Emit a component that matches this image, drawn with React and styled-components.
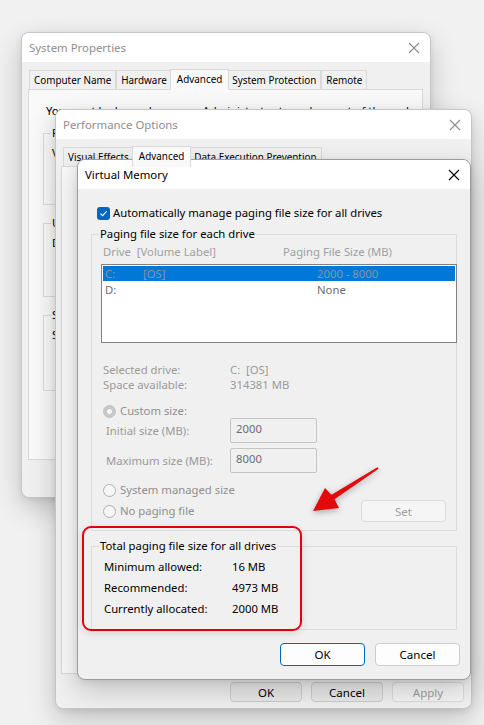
import React from 'react';
import styled, { createGlobalStyle } from 'styled-components';

const GlobalStyle = createGlobalStyle`
  html, body { margin: 0; padding: 0; }
  body {
    background: #f1f1f1;
    font-family: "Segoe UI", "Noto Sans", "Open Sans", sans-serif;
    font-size: 11.3px;
    color: #000;
  }
`;

const Desktop = styled.div`
  position: relative;
  width: 484px;
  height: 725px;
  overflow: hidden;
`;

const Window = styled.div`
  position: absolute;
  left: ${p => p.$x}px;
  top: ${p => p.$y}px;
  width: ${p => p.$w}px;
  height: ${p => p.$h}px;
  box-sizing: border-box;
  display: flex;
  flex-direction: column;
  background: #f0f0f0;
  border: 1px solid ${p => (p.$active ? '#9c9c9c' : '#c6c6c6')};
  border-radius: 8px;
  overflow: hidden;
  box-shadow: 0 10px 28px rgba(0, 0, 0, 0.2), 0 2px 6px rgba(0, 0, 0, 0.08);
`;

const TitleBar = styled.div`
  height: 29px;
  flex: none;
  display: flex;
  align-items: center;
  justify-content: space-between;
  padding: 0 10px 0 7px;
  background: #fff;
`;

const Title = styled.span`
  color: ${p => (p.$active ? '#000' : '#8e8e8e')};
  font-size: 11.4px;
  line-height: 16px;
`;

const TabStrip = styled.div`
  display: flex;
  align-items: flex-end;
  height: 21px;
  margin: 6px 0 0 ${p => p.$indent}px;
`;

const Tab = styled.div`
  box-sizing: border-box;
  height: ${p => (p.$selected ? 21 : 19)}px;
  line-height: ${p => (p.$selected ? 18 : 19)}px;
  font-size: 9.9px;
  padding: 0 ${p => (p.$selected ? 6 : 4)}px;
  margin: 0 ${p => (p.$selected ? -2 : 0)}px;
  position: relative;
  z-index: ${p => (p.$selected ? 1 : 0)};
  border: 1px solid #d9d9d9;
  border-bottom: ${p => (p.$selected ? '1px solid #f9f9f9' : 'none')};
  margin-bottom: ${p => (p.$selected ? -1 : 0)}px;
  background: ${p => (p.$selected ? '#f9f9f9' : '#f0f0f0')};
  white-space: nowrap;
`;

const TabPanel = styled.div`
  box-sizing: border-box;
  height: ${p => p.$h}px;
  margin: 0 ${p => p.$right}px 0 ${p => p.$left}px;
  border: 1px solid #d9d9d9;
  background: #f9f9f9;
  padding: ${p => p.$pad};
  display: flex;
  flex-direction: column;
  overflow: hidden;
`;

const PanelText = styled.div`
  line-height: 16px;
  white-space: nowrap;
`;

const GroupBox = styled.fieldset`
  margin: ${p => p.$mt || 0}px ${p => p.$mr || 0}px 0 ${p => p.$ml || 0}px;
  padding: 0;
  min-width: 0;
  border: 1px solid #dcdcdc;
  border-radius: 0;
  height: ${p => (p.$h ? `${p.$h}px` : 'auto')};
  box-sizing: border-box;
`;

const Legend = styled.legend`
  margin-left: 7px;
  padding: 0 1px;
  line-height: 16px;
  color: #000;
`;

const GroupInner = styled.div`
  padding: ${p => p.$pad};
  display: flex;
  flex-direction: column;
`;

const Body = styled.div`
  flex: 1;
  display: flex;
  flex-direction: column;
  padding: 0 13px;
`;

const CheckRow = styled.label`
  display: flex;
  align-items: center;
  gap: 3px;
  margin: 16px 0 0 6px;
  line-height: 16px;
`;

const CheckBox = styled.span`
  width: 13px;
  height: 13px;
  border-radius: 3px;
  background: #0067c0;
  display: flex;
  align-items: center;
  justify-content: center;
`;

const ColumnHeader = styled.div`
  display: grid;
  grid-template-columns: 180px auto;
  padding-left: 11px;
  margin-top: 2px;
  line-height: 16px;
  color: #a0a0a0;
  white-space: nowrap;
`;

const ListBox = styled.div`
  margin: 4px -1px 0 9px;
  height: 79px;
  box-sizing: border-box;
  border: 1px solid #828282;
  background: #fff;
  padding: 1px;
`;

const ListRow = styled.div`
  display: grid;
  grid-template-columns: 38px 174px auto;
  height: 15px;
  line-height: 15px;
  padding-left: 2px;
  margin-bottom: 1px;
  background: ${p => (p.$selected ? '#0078d7' : 'transparent')};
  color: ${p => (p.$selected ? '#8197ae' : '#6d6d6d')};
  white-space: nowrap;
`;

const InfoGrid = styled.div`
  display: grid;
  grid-template-columns: 127px auto;
  margin: 19px 0 0 11px;
  line-height: 15px;
  color: #9a9a9a;
`;

const RadioRow = styled.div`
  display: flex;
  align-items: center;
  gap: 4px;
  line-height: 16px;
  margin: ${p => p.$mt}px 0 0 11px;
  color: #8f8f8f;
`;

const Radio = styled.span`
  box-sizing: border-box;
  width: 13px;
  height: 13px;
  border-radius: 50%;
  border: 1px solid ${p => (p.$checked ? '#c2c2c2' : '#b0b0b0')};
  background: ${p => (p.$checked ? '#c8c8c8' : '#f6f6f6')};
  display: flex;
  align-items: center;
  justify-content: center;
  &::after {
    content: '';
    display: ${p => (p.$checked ? 'block' : 'none')};
    width: 5px;
    height: 5px;
    border-radius: 50%;
    background: #f7f7f7;
  }
`;

const FieldRow = styled.div`
  display: grid;
  grid-template-columns: 124px 87px;
  align-items: center;
  margin: ${p => p.$mt}px 0 0 14px;
  color: #9a9a9a;
`;

const Field = styled.div`
  box-sizing: border-box;
  height: 25px;
  border: 1px solid #c4c4c4;
  border-radius: 2px;
  background: #f0f0f0;
  padding: 2px 5px;
  line-height: 16px;
  color: #6d6d6d;
`;

const SplitRow = styled.div`
  display: flex;
  align-items: center;
  justify-content: space-between;
  margin: 2px 10px 8px 0;
`;

const Button = styled.button`
  box-sizing: border-box;
  width: ${p => p.$w}px;
  height: ${p => p.$h}px;
  padding: 0;
  font: inherit;
  font-size: 11.5px;
  color: ${p => (p.$disabled ? '#a0a0a0' : '#000')};
  background: ${p => (p.$disabled ? '#f5f5f5' : p.$flat ? '#e9e9e9' : '#fdfdfd')};
  border: 1px solid ${p => (p.$primary ? '#0067c0' : p.$disabled ? '#dcdcdc' : '#cdcdcd')};
  border-radius: 4px;
`;

const TotalsGrid = styled.div`
  display: grid;
  grid-template-columns: 128px auto;
  line-height: 21px;
  margin: 2px 0 10px 12px;
`;

const ButtonRow = styled.div`
  display: flex;
  justify-content: flex-end;
  gap: ${p => p.$gap}px;
  margin: ${p => p.$mt}px ${p => p.$mr}px 0 0;
`;

const Highlight = styled.div`
  position: absolute;
  left: 82px;
  top: 526px;
  width: 220px;
  height: 105px;
  box-sizing: border-box;
  border: 2.5px solid #e1000f;
  border-radius: 9px;
  box-shadow: 0 2px 8px rgba(0, 0, 0, 0.12);
`;

const Arrow = styled.svg`
  position: absolute;
  left: 0;
  top: 0;
  filter: drop-shadow(0 2px 3px rgba(0, 0, 0, 0.3));
`;

const Close = ({ active }) => (
  <svg width="12" height="12" viewBox="0 0 12 12">
    <path
      d="M1 1 L11 11 M11 1 L1 11"
      stroke={active ? '#000' : '#8e8e8e'}
      strokeWidth="1.1"
      fill="none"
    />
  </svg>
);

const Check = () => (
  <svg width="9" height="9" viewBox="0 0 9 9">
    <path d="M1.5 4.6 L3.6 6.6 L7.6 2.4" stroke="#fff" strokeWidth="1.2" fill="none" />
  </svg>
);

function SystemProperties() {
  const tabs = ['Computer Name', 'Hardware', 'Advanced', 'System Protection', 'Remote'];
  return (
    <Window $x={21} $y={32} $w={410} $h={466}>
      <TitleBar>
        <Title>System Properties</Title>
        <Close />
      </TitleBar>
      <TabStrip $indent={7}>
        {tabs.map(t => (
          <Tab key={t} $selected={t === 'Advanced'}>{t}</Tab>
        ))}
      </TabStrip>
      <TabPanel $h={371} $left={6} $right={7} $pad="13px 14px 0 14px">
        <PanelText style={{ marginLeft: 3 }}>
          You must be logged on as an Administrator to make most of these changes.
        </PanelText>
        <GroupBox $mt={6} $h={80}>
          <Legend>Performance</Legend>
          <GroupInner $pad="4px 8px">
            <PanelText>Visual effects, processor scheduling, memory usage, and virtual memory</PanelText>
          </GroupInner>
        </GroupBox>
        <GroupBox $mt={10} $h={82}>
          <Legend>User Profiles</Legend>
          <GroupInner $pad="4px 8px">
            <PanelText>Desktop settings related to your sign-in</PanelText>
          </GroupInner>
        </GroupBox>
        <GroupBox $mt={10} $h={84}>
          <Legend>Startup and Recovery</Legend>
          <GroupInner $pad="4px 8px">
            <PanelText>System startup, system failure, and debugging information</PanelText>
          </GroupInner>
        </GroupBox>
      </TabPanel>
    </Window>
  );
}

function PerformanceOptions() {
  const tabs = ['Visual Effects', 'Advanced', 'Data Execution Prevention'];
  return (
    <Window $x={55} $y={109} $w={417} $h={600}>
      <TitleBar>
        <Title>Performance Options</Title>
        <Close />
      </TitleBar>
      <TabStrip $indent={7}>
        {tabs.map(t => (
          <Tab key={t} $selected={t === 'Advanced'}>{t}</Tab>
        ))}
      </TabStrip>
      <TabPanel $h={508} $left={5} $right={6} $pad="0" />
      <ButtonRow $gap={9} $mt={8} $mr={7}>
        <Button $w={72} $h={20} $flat>OK</Button>
        <Button $w={72} $h={20} $flat>Cancel</Button>
        <Button $w={72} $h={20} $disabled>Apply</Button>
      </ButtonRow>
    </Window>
  );
}

function VirtualMemory() {
  const drives = [
    { drive: 'C:', label: '[OS]', size: '2000 - 8000', selected: true },
    { drive: 'D:', label: '', size: 'None' },
  ];
  const totals = [
    ['Minimum allowed:', '16 MB'],
    ['Recommended:', '4973 MB'],
    ['Currently allocated:', '2000 MB'],
  ];
  return (
    <Window $x={77} $y={159} $w={394} $h={521} $active>
      <TitleBar>
        <Title $active>Virtual Memory</Title>
        <Close active />
      </TitleBar>
      <Body>
        <CheckRow>
          <CheckBox><Check /></CheckBox>
          Automatically manage paging file size for all drives
        </CheckRow>

        <GroupBox $mt={5}>
          <Legend>Paging file size for each drive</Legend>
          <GroupInner $pad="0">
            <ColumnHeader>
              <span>Drive&nbsp;&nbsp;[Volume Label]</span>
              <span>Paging File Size (MB)</span>
            </ColumnHeader>
            <ListBox>
              {drives.map(d => (
                <ListRow key={d.drive} $selected={d.selected}>
                  <span>{d.drive}</span>
                  <span>{d.label}</span>
                  <span>{d.size}</span>
                </ListRow>
              ))}
            </ListBox>

            <InfoGrid>
              <span>Selected drive:</span>
              <span>C:&nbsp;&nbsp;[OS]</span>
              <span>Space available:</span>
              <span>314381 MB</span>
            </InfoGrid>

            <RadioRow $mt={11}>
              <Radio $checked />
              Custom size:
            </RadioRow>
            <FieldRow $mt={-1}>
              <span>Initial size (MB):</span>
              <Field>2000</Field>
            </FieldRow>
            <FieldRow $mt={5}>
              <span>Maximum size (MB):</span>
              <Field>8000</Field>
            </FieldRow>

            <RadioRow $mt={9}>
              <Radio />
              System managed size
            </RadioRow>
            <SplitRow>
              <RadioRow $mt={0}>
                <Radio />
                No paging file
              </RadioRow>
              <Button $w={85} $h={22} $disabled>Set</Button>
            </SplitRow>
          </GroupInner>
        </GroupBox>

        <GroupBox $mt={7}>
          <Legend>Total paging file size for all drives</Legend>
          <TotalsGrid>
            {totals.map(([k, v]) => (
              <React.Fragment key={k}>
                <span>{k}</span>
                <span>{v}</span>
              </React.Fragment>
            ))}
          </TotalsGrid>
        </GroupBox>

        <ButtonRow $gap={10} $mt={13} $mr={-3}>
          <Button $w={85} $h={23} $primary>OK</Button>
          <Button $w={85} $h={23}>Cancel</Button>
        </ButtonRow>
      </Body>
    </Window>
  );
}

export default function App() {
  return (
    <Desktop>
      <GlobalStyle />
      <SystemProperties />
      <PerformanceOptions />
      <VirtualMemory />
      <Highlight />
      <Arrow width="484" height="725" viewBox="0 0 484 725">
        <polygon
          points="377.4,467.2 331.5,494.7 325,488 313,511 339,508 334.5,499.3 378.6,468.8"
          fill="#e10b0b"
        />
      </Arrow>
    </Desktop>
  );
}
